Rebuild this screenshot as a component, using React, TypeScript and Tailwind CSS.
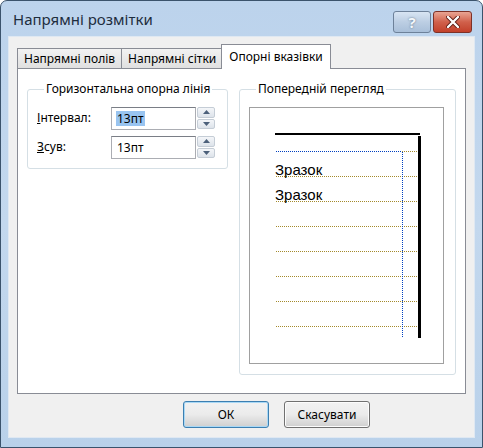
import { ReactNode } from "react";

const ui = { fontFamily: '"Noto Sans", "Liberation Sans", sans-serif' };

function GroupBox({ title, className, children }: { title: string; className?: string; children: ReactNode }) {
  return (
    <fieldset className={`border border-[#d5dfe5] rounded-[3px] ${className ?? ""}`}>
      <legend className="ml-[7px] px-[2px] text-[12px] leading-[14px] text-black">{title}</legend>
      {children}
    </fieldset>
  );
}

function Spinner() {
  return (
    <div className="flex flex-col w-[18px] h-[22px] gap-[1px]">
      {[0, 1].map((i) => (
        <div
          key={i}
          className="flex-1 flex items-center justify-center rounded-[2px] border border-[#c5cdd6] bg-gradient-to-b from-[#f4f6f9] to-[#dde3ea]"
        >
          <svg width="7" height="4" viewBox="0 0 7 4">
            {i === 0 ? (
              <path d="M0 4 L3.5 0 L7 4 Z" fill="#4c607a" />
            ) : (
              <path d="M0 0 L3.5 4 L7 0 Z" fill="#4c607a" />
            )}
          </svg>
        </div>
      ))}
    </div>
  );
}

function FieldRow({ hot, rest, selected }: { hot: string; rest: string; selected?: boolean }) {
  return (
    <div className="flex items-center h-[22px]">
      <span className="w-[74px] text-[12px] text-black">
        <span className="underline">{hot}</span>
        {rest}
      </span>
      <div className="w-[85px] h-[23px] border border-[#abadb3] border-t-[#7a7e86] bg-white flex items-center pl-[4px]">
        <span className={`text-[12px] leading-[15px] px-[1px] ${selected ? "bg-[#99c4f0]" : ""}`}>13пт</span>
      </div>
      <div className="ml-[1px]">
        <Spinner />
      </div>
    </div>
  );
}

function Preview() {
  const gold = [69, 94, 119, 144, 169, 194, 219];
  const font = '"Liberation Sans", Arial, sans-serif';
  return (
    <div className="w-[195px] h-[257px] border border-[#a0a0a0] bg-white">
      <svg width="193" height="255" viewBox="0 0 193 255" shapeRendering="crispEdges">
        <defs>
          <pattern id="dotH" width="2" height="1" patternUnits="userSpaceOnUse">
            <rect width="1" height="1" fill="#a48a2c" />
          </pattern>
          <pattern id="dotB" width="2" height="1" patternUnits="userSpaceOnUse">
            <rect width="1" height="1" fill="#0040c0" />
          </pattern>
          <pattern id="dotV" width="1" height="2" patternUnits="userSpaceOnUse">
            <rect width="1" height="1" fill="#0040c0" />
          </pattern>
        </defs>
        <rect x="25" y="25" width="145" height="2" fill="#000" />
        <rect x="168" y="28" width="3" height="202" fill="#000" />
        <rect x="152" y="43" width="16" height="1" fill="url(#dotH)" />
        {gold.map((y) => (
          <rect key={y} x="25" y={y - 1} width="143" height="1" fill="url(#dotH)" />
        ))}
        <rect x="25" y="43" width="127" height="1" fill="url(#dotB)" />
        <rect x="152" y="43" width="1" height="186" fill="url(#dotV)" />
        <text x="25" y="67" fontFamily={font} fontSize="15" fill="#000" shapeRendering="auto">
          Зразок
        </text>
        <text x="25" y="92" fontFamily={font} fontSize="15" fill="#000" shapeRendering="auto">
          Зразок
        </text>
      </svg>
    </div>
  );
}

export default function App() {
  return (
    <div style={ui} className="w-[483px] h-[448px] flex flex-col rounded-t-[7px] border border-[#3b536c] bg-gradient-to-b from-[#bcd3ec] via-[#c3d8ee] to-[#b9d1ea] text-black">
      {/* title bar */}
      <div className="h-[35px] flex items-center pl-[12px] pr-[10px] shrink-0">
        <span className="text-[15px] text-[#1e2d3d] pt-[1px]">Напрямні розмітки</span>
        <div className="ml-auto flex gap-[2px] self-start mt-[10px]">
          <div className="w-[38px] h-[22px] rounded-[3px] border border-[#6d8199] bg-gradient-to-b from-[#d8e5f3] via-[#bccee3] to-[#a9bfd9] flex items-center justify-center">
            <span className="text-[15px] font-bold text-[#f4f7fb] leading-none [text-shadow:0_0_2px_#52677f]">?</span>
          </div>
          <div className="w-[39px] h-[22px] rounded-[3px] border border-[#7d3127] bg-gradient-to-b from-[#e8a493] via-[#d0604b] to-[#c2402a] flex items-center justify-center">
            <svg width="14" height="12" viewBox="0 0 14 12">
              <path d="M2 1 L12 11 M12 1 L2 11" stroke="#5a1a12" strokeWidth="4" strokeLinecap="round" />
              <path d="M2 1 L12 11 M12 1 L2 11" stroke="#ffffff" strokeWidth="2.4" strokeLinecap="round" />
            </svg>
          </div>
        </div>
      </div>

      {/* client */}
      <div className="mx-[7px] mb-[9px] flex-1 bg-[#f0f0f0] border border-[#dfe8f2] flex flex-col pl-[8px] pr-[8px] pt-[7px]">
        {/* tabs */}
        <div className="flex items-end h-[24px] relative z-10">
          <div className="h-[20px] px-[6px] flex items-center text-[12px] border border-[#898c95] border-b-0 bg-gradient-to-b from-[#f2f2f2] to-[#e0e0e0]">
            Напрямні полів
          </div>
          <div className="h-[20px] px-[6px] flex items-center text-[12px] border border-[#898c95] border-b-0 border-l-0 bg-gradient-to-b from-[#f2f2f2] to-[#e0e0e0]">
            Напрямні сітки
          </div>
          <div className="h-[25px] -mb-[1px] px-[7px] flex items-center text-[12px] border border-[#898c95] border-b-0 bg-white -ml-[2px]">
            Опорні вказівки
          </div>
        </div>

        {/* panel */}
        <div className="h-[326px] border border-[#898c95] bg-white flex gap-[11px] pl-[9px] pt-[13px]">
          <GroupBox title="Горизонтальна опорна лінія" className="w-[201px] h-[87px] pl-[9px] pt-[11px] flex flex-col gap-[7px]">
            <FieldRow hot="І" rest="нтервал:" selected />
            <FieldRow hot="З" rest="сув:" />
          </GroupBox>
          <GroupBox title="Попередній перегляд" className="w-[217px] h-[293px] pl-[9px] pt-[11px]">
            <Preview />
          </GroupBox>
        </div>

        {/* buttons */}
        <div className="flex gap-[15px] pl-[166px] mt-[7px]">
          <button className="w-[86px] h-[27px] rounded-[3px] border border-[#3c7fb1] bg-gradient-to-b from-[#f2f2f2] via-[#ebebeb] to-[#cfcfcf] text-[12px] shadow-[inset_0_0_0_1px_#a9d8f5]">
            ОК
          </button>
          <button className="w-[86px] h-[27px] rounded-[3px] border border-[#707070] bg-gradient-to-b from-[#f2f2f2] via-[#ebebeb] to-[#cfcfcf] text-[12px] shadow-[inset_0_0_0_1px_#fcfcfc]">
            Скасувати
          </button>
        </div>
      </div>
    </div>
  );
}
